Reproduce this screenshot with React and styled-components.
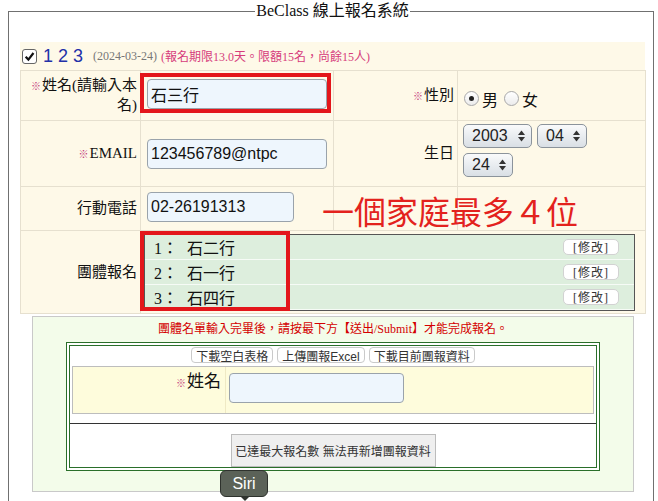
import React from 'react';
import styled, { createGlobalStyle } from 'styled-components';

const serif = `"Liberation Serif", "Noto Sans CJK TC", serif`;
const sans = `"Liberation Sans", "Noto Sans CJK TC", sans-serif`;

const GlobalStyle = createGlobalStyle`
  body {
    margin: 0;
    background: #fff;
    font-family: ${serif};
    color: #111;
  }
`;

const Page = styled.div`
  position: relative;
  height: 501px;
  overflow: hidden;
  padding: 2px 0 0 8px;
  box-sizing: border-box;
`;

const Fieldset = styled.fieldset`
  margin: 0;
  width: 646px;
  min-width: 0;
  box-sizing: border-box;
  border: 1px solid #707070;
  padding: 0 8px 60px 11px;
`;

const Legend = styled.legend`
  margin: 0 auto;
  padding: 0 1px;
  font-size: 16px;
  line-height: 18px;
`;

const Panel = styled.div`
  position: relative;
  margin-top: 22px;
  width: 625px;
  background: #fef9e8;
`;

const Header = styled.div`
  display: flex;
  align-items: center;
  height: 28px;
  padding-left: 2px;
`;

const CheckBox = styled.span`
  display: inline-flex;
  align-items: center;
  justify-content: center;
  width: 15px;
  height: 15px;
  box-sizing: border-box;
  border: 1px solid #666;
  border-radius: 3px;
  background: #fff;
`;

const ClassName = styled.span`
  margin-left: 6px;
  font: 18px ${sans};
  color: #2230a8;
`;

const DateText = styled.span`
  margin-left: 10px;
  font-size: 12px;
  color: #777;
`;

const QuotaText = styled.span`
  margin-left: 4px;
  font-size: 12px;
  color: #d63c7c;
`;

const FormTable = styled.table`
  width: 625px;
  border-collapse: collapse;
  table-layout: fixed;
`;

const Col = styled.col`
  width: ${(p) => p.$w}px;
`;

const Row = styled.tr`
  height: ${(p) => p.$h}px;
`;

const Label = styled.td`
  border: 1px solid #e6e0cf;
  padding: 0 3px 0 8px;
  text-align: right;
  vertical-align: middle;
  font-size: 15px;
  line-height: 19px;
`;

const Cell = styled.td`
  border: 1px solid #e6e0cf;
  padding: ${(p) => p.$pad || '0 5px'};
  vertical-align: ${(p) => (p.$top ? 'top' : 'middle')};
`;

const Mark = styled.span`
  font-size: 10px;
  color: #c2387a;
  margin-right: 1px;
`;

const TextInput = styled.input`
  display: block;
  width: ${(p) => p.$w}px;
  height: 30px;
  box-sizing: border-box;
  border: 1px solid #9aa3ab;
  border-radius: 4px;
  background: #eef6fd;
  padding: 0 3px;
  font: 16px ${sans};
  color: #111;
  outline: none;
`;

const RadioGroup = styled.div`
  display: flex;
  align-items: center;
  font-size: 16px;
  padding-top: 6px;
`;

const Radio = styled.span`
  display: inline-flex;
  align-items: center;
  justify-content: center;
  width: 15px;
  height: 15px;
  box-sizing: border-box;
  border-radius: 50%;
  border: 1px solid #a8a8a8;
  background: linear-gradient(#fff, #ececec);
  margin: 0 3px 0 ${(p) => p.$ml}px;

  &::after {
    content: '';
    width: 5px;
    height: 5px;
    border-radius: 50%;
    background: ${(p) => (p.$checked ? '#222' : 'transparent')};
  }
`;

const SelectWrap = styled.div`
  display: flex;
  flex-wrap: wrap;
  width: 130px;
  gap: 5px 5px;
`;

const Select = styled.div`
  display: inline-flex;
  align-items: center;
  justify-content: space-between;
  width: ${(p) => p.$w}px;
  height: 24px;
  box-sizing: border-box;
  border: 1px solid #8b939b;
  border-radius: 5px;
  background: linear-gradient(#f9fafb, #d9dfe5);
  padding: 0 6px 0 8px;
  font: 16px ${sans};
  color: #222;
`;

const GroupBox = styled.div`
  border: 1px solid #555;
  background: #ddeedd;
`;

const GroupItem = styled.div`
  display: flex;
  align-items: center;
  justify-content: space-between;
  height: 24px;
  border-bottom: 1px solid #f6fbf6;
  padding: 0 15px 0 9px;
  font-size: 16px;
`;

const Num = styled.span`
  display: inline-block;
  width: 33px;
`;

const EditButton = styled.span`
  display: inline-flex;
  align-items: center;
  justify-content: center;
  width: 56px;
  height: 16px;
  box-sizing: border-box;
  border: 1px solid #d2d2d2;
  border-radius: 5px;
  background: #fff;
  font-size: 12px;
  color: #333;
  letter-spacing: 1px;
`;

const RedFrame = styled.div`
  position: absolute;
  left: ${(p) => p.$x}px;
  top: ${(p) => p.$y}px;
  width: ${(p) => p.$w}px;
  height: ${(p) => p.$h}px;
  box-sizing: border-box;
  border: 4px solid #e3161b;
  pointer-events: none;
`;

const BigNote = styled.div`
  position: absolute;
  left: 302px;
  top: 155px;
  font: 32px/32px ${sans};
  color: #e3221d;
  white-space: nowrap;
`;

const Notice = styled.div`
  margin: 2px 0 0 12px;
  width: 602px;
  box-sizing: border-box;
  border: 1px solid #c9c9c9;
  background: #f3fcea;
  padding: 3px 33px 20px;
`;

const NoticeText = styled.div`
  text-align: center;
  color: #d40000;
  font-size: 12px;
  line-height: 18px;
  margin-bottom: 4px;
`;

const GreenFrame = styled.div`
  border: 4px double #2a6f2a;
  background: #fff;
  padding: 1px 2px 0;
`;

const ToolBar = styled.div`
  display: flex;
  justify-content: center;
  gap: 4px;
`;

const ToolButton = styled.span`
  display: inline-flex;
  align-items: center;
  height: 16px;
  box-sizing: border-box;
  padding: 0 4px;
  border: 1px solid #cacaca;
  border-radius: 4px;
  background: #fff;
  font: 12px ${sans};
  color: #333;
`;

const YellowBox = styled.div`
  display: flex;
  margin-top: 3px;
  height: 48px;
  box-sizing: border-box;
  border: 1px solid #bdbdbd;
  background: #fefcdc;
`;

const SubLabel = styled.div`
  width: 153px;
  box-sizing: border-box;
  padding: 1px 4px 0 0;
  text-align: right;
  font-size: 17px;
  line-height: 28px;
  border-right: 1px solid #efe9c4;
`;

const SubInput = styled(TextInput)`
  margin: 6px 0 0 3px;
`;

const Divider = styled.div`
  margin: 9px -2px 0;
  height: 1px;
  background: #333;
`;

const FullButton = styled.div`
  display: flex;
  align-items: center;
  justify-content: center;
  margin: 10px auto 0;
  width: 205px;
  height: 33px;
  box-sizing: border-box;
  border: 1px solid #bcbcbc;
  background: #efefef;
  font: 12px ${sans};
  color: #333;
`;

const Siri = styled.div`
  position: absolute;
  left: 220px;
  top: 470px;
  width: 48px;
  height: 27px;
  box-sizing: border-box;
  border: 1px solid #2e322d;
  border-radius: 6px;
  background: #5b6258;
  color: #fff;
  font: 16px/25px ${sans};
  text-align: center;

  &::after {
    content: '';
    position: absolute;
    left: 19px;
    bottom: -5px;
    border-left: 5px solid transparent;
    border-right: 5px solid transparent;
    border-top: 5px solid #2e322d;
  }
`;

const Arrows = () => (
  <svg width="7" height="12" viewBox="0 0 7 12">
    <polygon points="0,5 3.5,0.5 7,5" fill="#333" />
    <polygon points="0,7 3.5,11.5 7,7" fill="#333" />
  </svg>
);

const group = [
  { n: '1：', name: '石二行' },
  { n: '2：', name: '石一行' },
  { n: '3：', name: '石四行' },
];

const App = () => (
  <Page>
    <GlobalStyle />
    <Fieldset>
      <Legend>BeClass 線上報名系統</Legend>
      <Panel>
        <Header>
          <CheckBox>
            <svg width="11" height="11" viewBox="0 0 10 10">
              <path d="M1.5 5.2 L4 7.8 L8.6 1.8" stroke="#111" strokeWidth="2" fill="none" />
            </svg>
          </CheckBox>
          <ClassName>1 2 3</ClassName>
          <DateText>(2024-03-24)</DateText>
          <QuotaText>(報名期限13.0天。限額15名，尚餘15人)</QuotaText>
        </Header>
        <FormTable>
          <colgroup>
            <Col $w={120} />
            <Col $w={193} />
            <Col $w={124} />
            <Col $w={188} />
          </colgroup>
          <tbody>
            <Row $h={50}>
              <Label>
                <Mark>※</Mark>姓名(請輸入本名)
              </Label>
              <Cell $pad="0 5px 3px 6px">
                <TextInput $w={180} readOnly defaultValue="石三行" />
              </Cell>
              <Label>
                <Mark>※</Mark>性別
              </Label>
              <Cell>
                <RadioGroup>
                  <Radio $checked $ml={1} />男
                  <Radio $ml={6} />女
                </RadioGroup>
              </Cell>
            </Row>
            <Row $h={66}>
              <Label>
                <Mark>※</Mark>EMAIL
              </Label>
              <Cell $pad="0 5px 0 6px">
                <TextInput $w={180} readOnly defaultValue="123456789@ntpc" />
              </Cell>
              <Label>生日</Label>
              <Cell $top $pad="3px 5px 0">
                <SelectWrap>
                  <Select $w={69}>
                    2003 <Arrows />
                  </Select>
                  <Select $w={50}>
                    04 <Arrows />
                  </Select>
                  <Select $w={50}>
                    24 <Arrows />
                  </Select>
                </SelectWrap>
              </Cell>
            </Row>
            <Row $h={44}>
              <Label>行動電話</Label>
              <Cell $pad="0 5px 4px 6px">
                <TextInput $w={147} readOnly defaultValue="02-26191313" />
              </Cell>
              <Cell />
              <Cell />
            </Row>
            <Row $h={83}>
              <Label>團體報名</Label>
              <Cell colSpan={3} $pad="0 10px 0 3px">
                <GroupBox>
                  {group.map((g) => (
                    <GroupItem key={g.n}>
                      <span>
                        <Num>{g.n}</Num>
                        {g.name}
                      </span>
                      <EditButton>[修改]</EditButton>
                    </GroupItem>
                  ))}
                </GroupBox>
              </Cell>
            </Row>
          </tbody>
        </FormTable>
        <BigNote>一個家庭最多４位</BigNote>
        <RedFrame $x={120} $y={31} $w={191} $h={40} />
        <RedFrame $x={120} $y={189} $w={150} $h={80} />
      </Panel>
      <Notice>
        <NoticeText>團體名單輸入完畢後，請按最下方【送出/Submit】才能完成報名。</NoticeText>
        <GreenFrame>
          <ToolBar>
            <ToolButton>下載空白表格</ToolButton>
            <ToolButton>上傳團報Excel</ToolButton>
            <ToolButton>下載目前團報資料</ToolButton>
          </ToolBar>
          <YellowBox>
            <SubLabel>
              <Mark>※</Mark>姓名
            </SubLabel>
            <SubInput $w={175} readOnly defaultValue="" />
          </YellowBox>
          <Divider />
          <FullButton>已達最大報名數 無法再新增團報資料</FullButton>
        </GreenFrame>
      </Notice>
    </Fieldset>
    <Siri>Siri</Siri>
  </Page>
);

export default App;
